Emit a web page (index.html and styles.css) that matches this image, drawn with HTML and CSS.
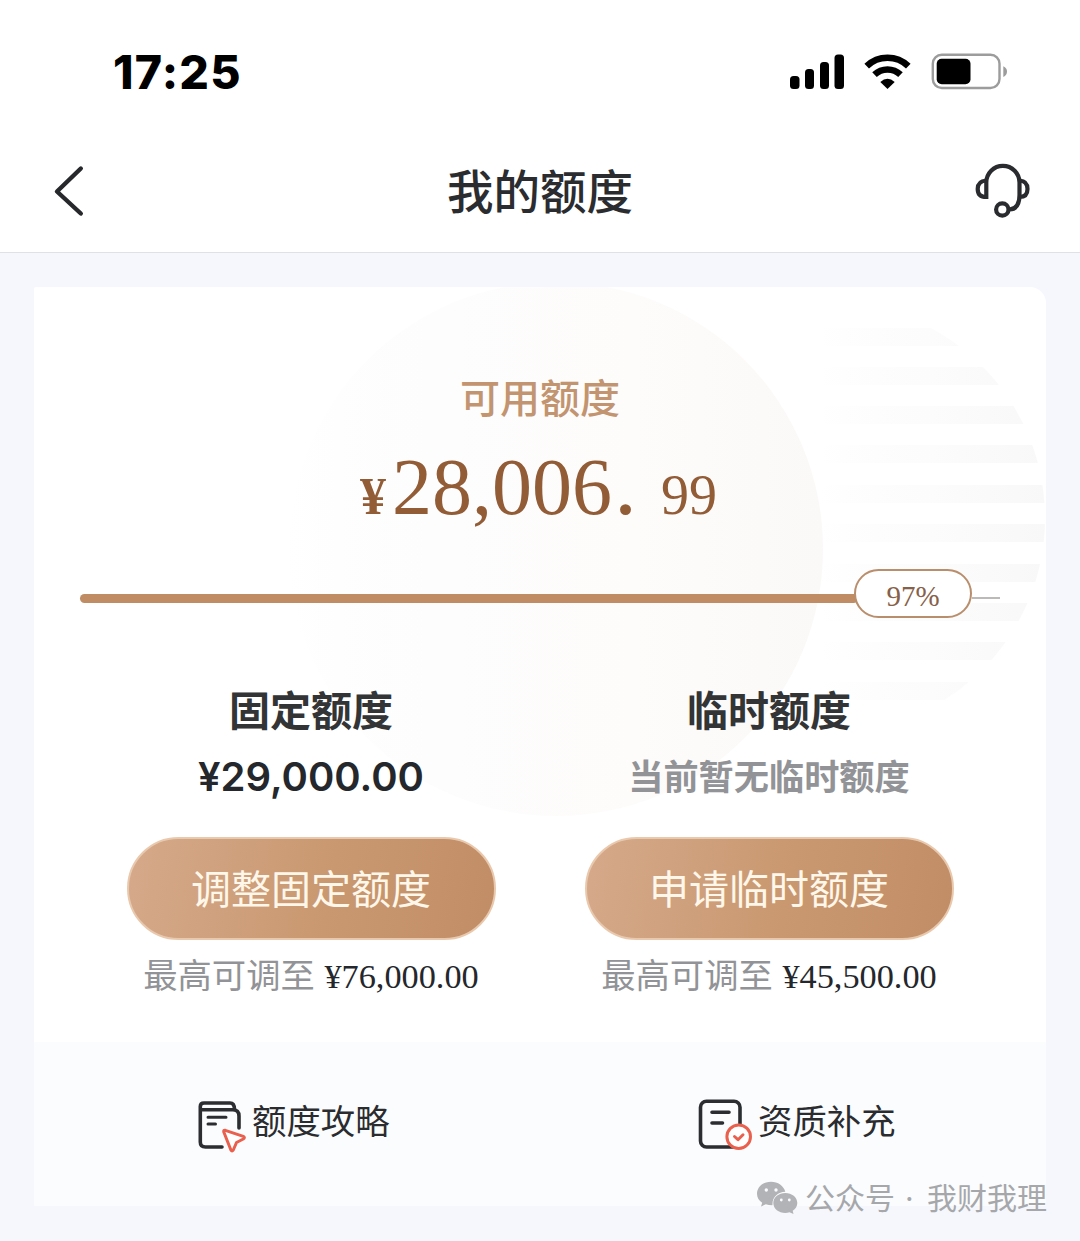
FILE: index.html
```html
<!DOCTYPE html>
<html lang="zh-CN">
<head>
<meta charset="UTF-8">
<title>我的额度</title>
<link rel="stylesheet" href="styles.css">
</head>
<body>
<div class="status">
  <span class="time">17:25</span>
  <svg class="status-icons" width="220" height="40" viewBox="788 52 220 40">
    <rect x="790" y="76" width="9.5" height="13" rx="3.5"/>
    <rect x="805" y="69" width="9" height="20" rx="3.5"/>
    <rect x="820" y="62" width="9" height="27" rx="3.5"/>
    <rect x="834.500" y="54.500" width="9.500" height="34.500" rx="3.500"/>
    <g fill="none" stroke="#000" stroke-width="6.600">
      <path d="M866.700 66.200A30 30 0 0 1 908.300 66.200"/>
      <path d="M874.500 74.700A19 19 0 0 1 900.500 74.700"/>
    </g>
    <path d="M887.500 88.900L880.300 81.900Q887.500 75.500 894.700 81.900Z"/>
    <rect x="932.800" y="54.800" width="66.700" height="33.200" rx="9" fill="none" stroke="#9c9c9c" stroke-width="2.400"/>
    <rect x="936.700" y="58.700" width="33.800" height="25.500" rx="5"/>
    <path d="M1003.300 66.300Q1007 68 1007 71.500T1003.300 77Z" fill="#9c9c9c"/>
  </svg>
</div>
<header class="nav">
  <svg width="32" height="54" viewBox="53 164 32 54" fill="none" stroke="#26282b" stroke-width="4.400" stroke-linecap="round" stroke-linejoin="round"><path d="M80.800 168.500L57 191.500L80.800 213.500"/></svg>
  <h1>我的额度</h1>
  <svg width="56" height="56" viewBox="974 163 56 56" fill="none" stroke="#292b2e" stroke-width="4.200">
    <path d="M986.300 199V182.500A16.300 16.300 0 0 1 1019.500 182.500V195Q1019.500 209 1009.500 209.500"/>
    <path d="M986.300 180.500Q977.700 181 977.700 189T986.300 197"/>
    <path d="M1019.500 180.500Q1027.500 181 1027.500 189T1019.500 197"/>
    <circle cx="1002.300" cy="209.500" r="6.200"/>
  </svg>
</header>
<main class="card">
  <section class="quota">
    <svg class="decor" width="1012" height="755" viewBox="34 287 1012 755">
      <defs>
        <linearGradient id="disc"><stop offset="0" stop-color="#fdfbfb" stop-opacity="0"/><stop offset=".3" stop-color="#fefdfd"/><stop offset=".65" stop-color="#fdfcfb"/><stop offset="1" stop-color="#fbf9f7"/></linearGradient>
        <linearGradient id="band" gradientUnits="userSpaceOnUse" x1="820" y1="0" x2="1045" y2="0"><stop offset="0" stop-color="#fafafb" stop-opacity="0"/><stop offset=".5" stop-color="#fcfcfc"/><stop offset="1" stop-color="#f8f8f9"/></linearGradient>
        <clipPath id="round"><circle cx="830" cy="518" r="215"/></clipPath>
      </defs>
      <circle cx="556" cy="549" r="267" fill="url(#disc)"/>
      <path clip-path="url(#round)" fill="url(#band)" d="M800 328h245v18H800ZM800 367h245v18H800ZM800 406h245v18H800ZM800 445h245v18H800ZM800 485h245v18H800ZM800 524h245v18H800ZM800 564h245v18H800ZM800 603h245v18H800ZM800 642h245v18H800ZM800 682h245v18H800Z"/>
    </svg>
    <div class="label">可用额度</div>
    <div class="amount"><span class="yen">¥</span><span class="whole">28,006</span><span class="point">.</span><span class="cents">99</span></div>
    <div class="progress"><div class="done"></div><div class="pill">97%</div><div class="rest"></div></div>
    <div class="columns">
      <div class="col">
        <h2>固定额度</h2>
        <div class="value">¥29,000.00</div>
        <div class="btn">调整固定额度</div>
        <div class="note">最高可调至 <b>¥76,000.00</b></div>
      </div>
      <div class="col">
        <h2>临时额度</h2>
        <div class="value none">当前暂无临时额度</div>
        <div class="btn">申请临时额度</div>
        <div class="note">最高可调至 <b>¥45,500.00</b></div>
      </div>
    </div>
  </section>
  <nav class="links">
    <div class="link guide">
      <svg width="52" height="56" viewBox="196 1098 52 56" fill="none" stroke="#2b2d31" stroke-width="3.600" stroke-linecap="round" stroke-linejoin="round">
        <path d="M222 1147H205.500Q200.300 1147 200.300 1142V1106.500Q200.300 1103 204 1103H230Q234.500 1103 234.500 1109.500"/>
        <path d="M201 1109.800H232.500Q239 1109.800 239 1116V1128"/>
        <path d="M208 1117.300H226M208 1124H215.500" stroke-width="3"/>
        <path d="M225.300 1130.300L243.300 1136.300Q245.500 1137.500 243.300 1139L236.500 1142.500L233.300 1150Q232 1152 230.900 1150L223.700 1131.800Q223.500 1129.800 225.300 1130.300Z" fill="#fff" stroke="#e9614e" stroke-width="3"/>
      </svg>
      <span>额度攻略</span>
    </div>
    <div class="link extra">
      <svg width="56" height="56" viewBox="697 1098 56 56" fill="none" stroke="#2b2d31" stroke-width="3.600" stroke-linecap="round" stroke-linejoin="round">
        <rect x="700.500" y="1101.300" width="39.500" height="45.700" rx="6"/>
        <path d="M712 1112.300H729M712 1123H722.500"/>
        <circle cx="738.700" cy="1136.700" r="11.800" fill="#fff" stroke="#e9614e" stroke-width="3"/>
        <path d="M734.500 1136.500L738 1139.700L743 1134.800" stroke="#e9614e" stroke-width="3"/>
      </svg>
      <span>资质补充</span>
    </div>
  </nav>
</main>
<div class="credit">
  <svg width="42" height="36" viewBox="756 1180 42 36">
    <path fill="#b2b3b6" d="M771 1181.700C763 1181.700 757 1187 757 1193.700C757 1197.500 759 1200.700 762.200 1202.800L761 1206.500L765.800 1204.300Q769 1205.300 772.500 1205.200C772 1197 778 1191.700 785.300 1191.700C783.700 1185.700 778 1181.700 771 1181.700Z"/>
    <path fill="#b2b3b6" d="M785.300 1193C778.800 1193 773.300 1197.300 773.300 1203C773.300 1208.700 778.800 1213 785.300 1213Q787.500 1213 789.500 1212.300L793.500 1214L792.700 1210.800C795.500 1209 797.300 1206.200 797.300 1203C797.300 1197.300 791.800 1193 785.300 1193Z"/>
    <g fill="#fbfcff"><circle cx="766.300" cy="1190" r="1.700"/><circle cx="776" cy="1190" r="1.700"/><circle cx="781.300" cy="1200" r="1.400"/><circle cx="789.300" cy="1200" r="1.400"/></g>
  </svg>
  <span class="source">公众号</span><span class="dot">·</span><span class="author">我财我理</span>
</div>
</body>
</html>
```
FILE: styles.css
```css
* { box-sizing: border-box; }
body {
  margin: 0;
  width: 1080px;
  height: 1241px;
  position: relative;
  overflow: hidden;
  background: #f5f7fc;
  color: #2b2c2f;
  font-family: Inter, "Noto Sans CJK SC", sans-serif;
}
h1, h2 { margin: 0; }
svg { display: block; flex: none; }
.status {
  height: 130px;
  padding: 52px 72px 0 113px;
  display: flex;
  justify-content: space-between;
  background: #fff;
}
.time {
  font-weight: 800;
  font-size: 46.500px;
  line-height: 41px;
  letter-spacing: 1.200px;
  color: #000;
}
.nav {
  height: 123px;
  padding: 0 50px 0 53px;
  display: grid;
  grid-template-columns: 56px 1fr 56px;
  align-items: center;
  background: #fff;
  border-bottom: 1px solid #dfe1e4;
}
.nav h1 {
  padding: 1px 3px 0 0;
  text-align: center;
  font-size: 46.500px;
  line-height: 60px;
  font-weight: 500;
}
.card {
  width: 1012px;
  height: 919px;
  margin: 34px auto 0;
  border-radius: 2px 16px 2px 2px;
  overflow: hidden;
  background: #fff;
}
.quota {
  position: relative;
  height: 755px;
  padding: 88px 46px 0;
}
.decor {
  position: absolute;
  left: 0;
  top: 0;
}
.quota > div { position: relative; }
.label {
  height: 48px;
  line-height: 48px;
  text-align: center;
  font-size: 40px;
  font-weight: 500;
  color: #c29470;
}
.amount {
  height: 92px;
  margin-top: 14px;
  padding-left: 280px;
  display: flex;
  align-items: baseline;
  line-height: 92px;
  font-family: "Liberation Serif", serif;
  color: #925c36;
}
.yen { font-size: 52px; font-weight: 700; width: 32px; }
.whole { font-size: 80px; width: 222px; }
.point { font-size: 92px; width: 47px; }
.cents { font-size: 56px; }
.progress {
  height: 49px;
  margin-top: 40px;
  display: flex;
  align-items: center;
}
.done {
  width: 778px;
  height: 9px;
  margin-top: 9px;
  border-radius: 5px;
  background: #c08c64;
}
.pill {
  width: 118px;
  height: 49px;
  margin-left: -4px;
  padding-top: 3px;
  border: 2.500px solid #b98e6c;
  border-radius: 25px;
  background: #fff;
  text-align: center;
  font: 29px/44px "Liberation Serif", serif;
  color: #866048;
}
.rest {
  width: 28px;
  height: 2px;
  margin-top: 9px;
  background: #bdb9b8;
}
.columns {
  margin: 63px 2px 0;
  display: grid;
  grid-template-columns: 1fr 1fr;
}
.col {
  display: flex;
  flex-direction: column;
  align-items: center;
}
.col h2 {
  font-size: 41px;
  line-height: 60px;
  font-weight: 700;
  color: #333436;
}
.value {
  height: 60px;
  margin-top: 6px;
  font-size: 40px;
  line-height: 60px;
  font-weight: 600;
  color: #24272b;
}
.value.none {
  font-size: 35.200px;
  font-weight: 700;
  color: #929397;
}
.btn {
  width: 369px;
  height: 103px;
  margin-top: 30px;
  padding-top: 2px;
  border: 2.500px solid #e9c9ae;
  border-radius: 52px;
  background: linear-gradient(100deg, #d5a98a, #c99870 55%, #c18d67);
  text-align: center;
  font-size: 40px;
  line-height: 98px;
  color: #fff7e9;
}
.note {
  height: 50px;
  margin-top: 11px;
  line-height: 50px;
  font-size: 34.300px;
  color: #929397;
  white-space: nowrap;
}
.note b {
  font-family: "Liberation Serif", serif;
  font-weight: 400;
  color: #24272b;
}
.links {
  height: 164px;
  padding: 56px 0 0 162px;
  display: flex;
  background: #fbfcfe;
}
.link {
  height: 56px;
  display: flex;
  font-size: 34.400px;
  line-height: 48px;
}
.guide { width: 501px; gap: 4px; }
.extra { gap: 5px; }
.credit {
  position: absolute;
  left: 756px;
  top: 1180px;
  display: flex;
  font-size: 30px;
  line-height: 36px;
  color: #a6a7aa;
}
.source { margin-left: 7px; width: 100px; }
.dot { width: 22px; }
```
